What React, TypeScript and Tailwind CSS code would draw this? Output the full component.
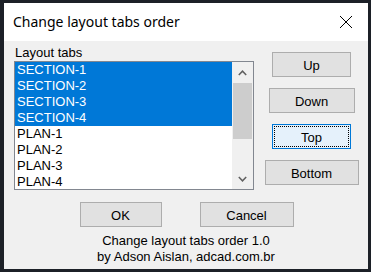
import React from 'react'

const items = [
  { name: 'SECTION-1', selected: true },
  { name: 'SECTION-2', selected: true },
  { name: 'SECTION-3', selected: true },
  { name: 'SECTION-4', selected: true },
  { name: 'PLAN-1', selected: false },
  { name: 'PLAN-2', selected: false },
  { name: 'PLAN-3', selected: false },
  { name: 'PLAN-4', selected: false },
]

const sans = { fontFamily: '"Liberation Sans", Arial, sans-serif' }

function Btn({ label, width, focused = false }: { label: string; width: string; focused?: boolean }) {
  if (focused) {
    return (
      <button className={`${width} h-[25px] border border-[#0078d7] bg-[#e5f1fb] p-[1px] text-[13px] text-black`}>
        <div className="h-full w-full border border-dotted border-black flex items-center justify-center leading-4 pt-[2px]">
          {label}
        </div>
      </button>
    )
  }
  return (
    <button className={`${width} h-[25px] border border-[#adadad] bg-[#e1e1e1] flex items-center justify-center pt-[2px] text-[13px] leading-4 text-black`}>
      {label}
    </button>
  )
}

export default function App() {
  return (
    <div className="w-[371px] h-[272px] bg-[#1c2027] pt-[3px] pl-[4px] pr-[3px] pb-[3px]" style={sans}>
      <div className="w-[364px] h-[266px] flex flex-col">
        {/* title bar */}
        <div className="h-[38px] bg-white flex items-center justify-between pl-[9px] pr-[15px]">
          <span className="text-[14px] leading-5 text-black pb-[1px]" style={{ fontFamily: '"Noto Sans", "Open Sans", sans-serif' }}>
            Change layout tabs order
          </span>
          <svg width="14" height="14" viewBox="0 0 14 14" className="mb-[1px]">
            <path d="M1 1 L13 13 M13 1 L1 13" stroke="#000" strokeWidth="1" fill="none" />
          </svg>
        </div>

        {/* body */}
        <div className="flex-1 bg-[#f0f0f0] flex flex-col">
          <div className="flex">
            <div className="ml-[10px] pt-[4px] w-[240px]">
              <div className="text-[13px] leading-4 text-black pl-[1px]">Layout tabs</div>
              <div className="h-[129px] border border-[#828790] bg-white flex overflow-hidden">
                <div className="w-[217px] flex flex-col">
                  {items.map((it) => (
                    <div
                      key={it.name}
                      className={`h-4 shrink-0 pl-[2px] text-[13px] leading-4 ${it.selected ? 'bg-[#0078d7] text-white' : 'text-black'}`}
                    >
                      {it.name}
                    </div>
                  ))}
                </div>
                <div className="w-[21px] bg-[#f0f0f0] flex flex-col">
                  <div className="h-[21px] flex items-center justify-center">
                    <svg width="9" height="6" viewBox="0 0 9 6">
                      <path d="M0.8 5 L4.5 1.2 L8.2 5" stroke="#606060" strokeWidth="1.5" fill="none" />
                    </svg>
                  </div>
                  <div className="flex-1 px-[1px]">
                    <div className="h-[56px] bg-[#cdcdcd]" />
                  </div>
                  <div className="h-[21px] flex items-center justify-center">
                    <svg width="9" height="6" viewBox="0 0 9 6">
                      <path d="M0.8 1 L4.5 4.8 L8.2 1" stroke="#606060" strokeWidth="1.5" fill="none" />
                    </svg>
                  </div>
                </div>
              </div>
            </div>
            <div className="flex-1 flex flex-col items-center gap-[11px] pt-[11px] pl-[1px]">
              <Btn label="Up" width="w-[79px]" />
              <Btn label="Down" width="w-[86px]" />
              <Btn label="Top" width="w-[79px]" focused />
              <Btn label="Bottom" width="w-[94px]" />
            </div>
          </div>

          <div className="mt-[12px] flex justify-center gap-[38px] pl-[1px]">
            <Btn label="OK" width="w-[82px]" />
            <Btn label="Cancel" width="w-[94px]" />
          </div>

          <div className="mt-[6px] flex flex-col items-center text-[13px] leading-4 text-black">
            <div>Change layout tabs order 1.0</div>
            <div>by Adson Aislan, adcad.com.br</div>
          </div>
        </div>
      </div>
    </div>
  )
}
